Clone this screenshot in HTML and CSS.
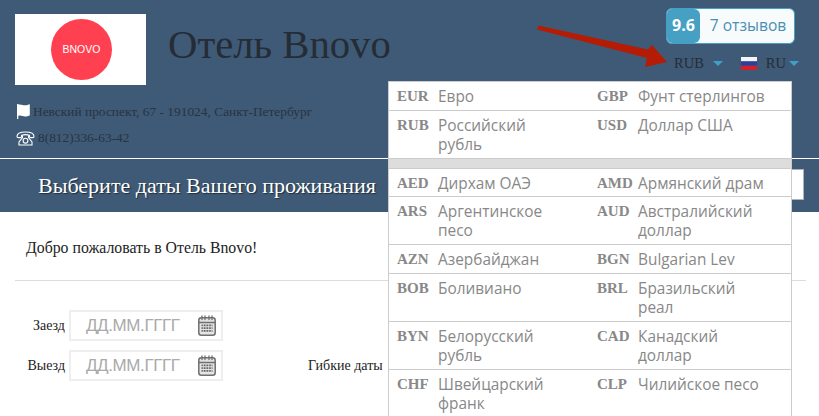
FILE: index.html
```html
<!DOCTYPE html>
<html lang="ru">
<head>
<meta charset="utf-8">
<title>Отель Bnovo</title>
<link rel="stylesheet" href="styles.css">
</head>
<body>
<header class="top">
  <div class="top-main">
    <div class="logo"><div class="logo-circle">BNOVO</div></div>
    <h1 class="hotel-name">Отель Bnovo</h1>
    <div class="top-right">
      <div class="rating"><span class="score">9.6</span><span class="reviews">7 отзывов</span></div>
      <div class="switchers">
        <span class="switch switch-cur">RUB<i class="caret"></i></span>
        <span class="switch"><svg class="flag-ru" width="16" height="13" viewBox="0 0 16 13"><rect width="16" height="4.4" fill="#f4f4f4"/><rect y="4.4" width="16" height="4.3" fill="#2b3f9c"/><rect y="8.7" width="16" height="4.3" fill="#d0222e"/></svg>RU<i class="caret"></i></span>
      </div>
    </div>
  </div>
  <div class="contact contact-addr">
    <svg class="ico-flag" width="13" height="15" viewBox="0 0 13 15"><path fill="#fff" d="M0 0h1.300v.5C4.500 0 6 1.300 8 1.300c1.800 0 3.200-.6 4.800-1v11.300c-1.600.5-3 1-4.800 1-2.300 0-3.700-1.500-6.700-.8V15H0z"/></svg>
    <span>Невский проспект, 67 - 191024, Санкт-Петербург</span>
  </div>
  <div class="contact contact-phone">
    <svg class="ico-phone" width="19" height="15" viewBox="0 0 19 15" fill="none" stroke="#fff" stroke-width="1.100"><path d="M1 5.500C1 2.800 4.500 1 9.500 1S18 2.800 18 5.500c0 .8-.6 1.100-1.300 1.100h-2c-.8 0-1.200-.5-1.200-1.200V4.300c-2.500-.8-5.500-.8-8 0v1.100c0 .7-.4 1.200-1.200 1.200h-2C1.600 6.600 1 6.300 1 5.500z"/><path d="M6.500 4.500v2L3 11v3h13v-3l-3.500-4.500v-2"/><circle cx="9.500" cy="9.700" r="2.400"/></svg>
    <span>8(812)336-63-42</span>
  </div>
</header>
<section class="banner">
  <h2 class="banner-title">Выберите даты Вашего проживания</h2>
  <div class="banner-input"></div>
</section>
<main class="content">
  <p class="welcome">Добро пожаловать в Отель Bnovo!</p>
  <hr class="rule">
  <form class="dates">
    <div class="date-row">
      <label class="date-label">Заезд</label>
      <div class="date-input"><span class="placeholder">ДД.ММ.ГГГГ</span>
        <svg class="ico-cal" width="18" height="21" viewBox="0 0 18 21"><rect x=".8" y="2.800" width="16.400" height="17.400" rx="2.500" fill="#e4e4e4" stroke="#6f6f6f" stroke-width="1.500"/><path d="M1 7.500h16" stroke="#6f6f6f" stroke-width="1.500"/><path d="M4 1v3.500M7 1v3.500M11 1v3.500M14 1v3.500" stroke="#6f6f6f" stroke-width="1.300" stroke-linecap="round"/><path d="M3.500 10.300h11M3.500 13.100h11M3.500 15.900h11" stroke="#666" stroke-width="1.700"/><path d="M5.300 9v8.500M8 9v8.500M10.700 9v8.500M13.300 9v8.500" stroke="#e4e4e4" stroke-width=".8"/></svg>
      </div>
    </div>
    <div class="date-row">
      <label class="date-label">Выезд</label>
      <div class="date-input"><span class="placeholder">ДД.ММ.ГГГГ</span>
        <svg class="ico-cal" width="18" height="21" viewBox="0 0 18 21"><rect x=".8" y="2.800" width="16.400" height="17.400" rx="2.500" fill="#e4e4e4" stroke="#6f6f6f" stroke-width="1.500"/><path d="M1 7.500h16" stroke="#6f6f6f" stroke-width="1.500"/><path d="M4 1v3.500M7 1v3.500M11 1v3.500M14 1v3.500" stroke="#6f6f6f" stroke-width="1.300" stroke-linecap="round"/><path d="M3.500 10.300h11M3.500 13.100h11M3.500 15.900h11" stroke="#666" stroke-width="1.700"/><path d="M5.300 9v8.500M8 9v8.500M10.700 9v8.500M13.300 9v8.500" stroke="#e4e4e4" stroke-width=".8"/></svg>
      </div>
      <span class="flex-dates">Гибкие даты</span>
    </div>
  </form>
</main>

<div class="currency-menu">
  <div class="cur-row">
    <div class="cur"><b>EUR</b><span>Евро</span></div>
    <div class="cur"><b>GBP</b><span>Фунт стерлингов</span></div>
  </div>
  <div class="cur-row">
    <div class="cur"><b>RUB</b><span>Российский рубль</span></div>
    <div class="cur"><b>USD</b><span>Доллар США</span></div>
  </div>
  <div class="cur-divider"></div>
  <div class="cur-row cur-row-tight">
    <div class="cur"><b>AED</b><span>Дирхам ОАЭ</span></div>
    <div class="cur"><b>AMD</b><span>Армянский драм</span></div>
  </div>
  <div class="cur-row">
    <div class="cur"><b>ARS</b><span>Аргентинское песо</span></div>
    <div class="cur"><b>AUD</b><span>Австралийский доллар</span></div>
  </div>
  <div class="cur-row">
    <div class="cur"><b>AZN</b><span>Азербайджан</span></div>
    <div class="cur"><b>BGN</b><span>Bulgarian Lev</span></div>
  </div>
  <div class="cur-row">
    <div class="cur"><b>BOB</b><span>Боливиано</span></div>
    <div class="cur"><b>BRL</b><span>Бразильский реал</span></div>
  </div>
  <div class="cur-row">
    <div class="cur"><b>BYN</b><span>Белорусский рубль</span></div>
    <div class="cur"><b>CAD</b><span>Канадский доллар</span></div>
  </div>
  <div class="cur-row">
    <div class="cur"><b>CHF</b><span>Швейцарский франк</span></div>
    <div class="cur"><b>CLP</b><span>Чилийское песо</span></div>
  </div>
</div>

<svg class="red-arrow" width="140" height="50" viewBox="0 0 140 50"><path fill="#b41c05" d="M2 4.500 3.500 .5 113 24.500 117 20 132 37 110 42 112 33z"/></svg>
</body>
</html>
```
FILE: styles.css
```css
html, body {
  margin: 0;
  padding: 0;
  height: 416px;
  overflow: hidden;
  background: #fff;
  font-family: "Liberation Serif", serif;
  color: #222;
}

.top {
  height: 158px;
  background: #3e5a77;
  border-bottom: 1px solid #fff;
  padding: 0 15px;
  display: flex;
  flex-direction: column;
}

.top-main {
  display: flex;
  height: 85px;
  padding-top: 14px;
}

.logo {
  width: 129px;
  height: 71px;
  padding-left: 2px;
  background: #fff;
  display: flex;
  align-items: center;
  justify-content: center;
  flex: none;
}

.logo-circle {
  width: 61px;
  height: 61px;
  border-radius: 50%;
  background: #ff4050;
  color: #fff;
  font: 10.500px/61px "Liberation Sans", sans-serif;
  text-align: center;
}

.hotel-name {
  margin: 8px 0 0 22px;
  font-weight: normal;
  font-size: 40.700px;
  line-height: 46px;
  color: #262c35;
}

.top-right {
  margin-left: auto;
  margin-top: -6px;
  margin-right: 9px;
  display: flex;
  flex-direction: column;
  align-items: flex-end;
}

.rating {
  display: flex;
  width: 129px;
  height: 36px;
  box-sizing: border-box;
  border: 1.500px solid #46a0c4;
  border-radius: 6px;
  background: #f8fbfc;
  overflow: hidden;
  font-family: "Open Sans", sans-serif;
  font-size: 15.600px;
  line-height: 32px;
}

.score {
  width: 33px;
  background: #45a0c4;
  color: #fff;
  font-weight: 700;
  font-size: 16px;
  text-align: center;
  border-radius: 0 6px 6px 0;
  flex: none;
}

.reviews {
  flex: 1;
  text-align: center;
  color: #4b8fb3;
  padding-left: 2px;
}

.switchers {
  display: flex;
  gap: 18px;
  margin-top: 10px;
  font-size: 14.500px;
  line-height: 18px;
  color: #262c35;
  margin-right: -4px;
}

.switch {
  display: flex;
  align-items: center;
}

.flag-ru {
  margin-right: 9px;
}

.caret {
  display: inline-block;
  width: 0;
  height: 0;
  margin-left: 3px;
  border-left: 5px solid transparent;
  border-right: 5px solid transparent;
  border-top: 5px solid #3e9fc8;
}

.switch-cur .caret {
  margin-left: 9px;
}

.contact {
  display: flex;
  align-items: flex-end;
  font-size: 13.400px;
  color: #2a3340;
  padding-left: 2px;
}

.contact-addr {
  margin-top: 3px;
  padding-top: 2px;
  line-height: 15px;
}

.contact-addr span {
  margin-left: 3px;
}

.contact-phone {
  margin-top: 11px;
  line-height: 16px;
  padding-left: 1px;
}

.contact-phone span {
  margin-left: 3px;
}

.banner {
  height: 53px;
  background: #3e5a77;
  display: flex;
  align-items: center;
  padding-left: 38px;
  padding-right: 15px;
}

.banner-title {
  margin: 0;
  font-weight: normal;
  font-size: 22px;
  color: #fff;
  text-shadow: 1px 1px 1px #1e2d3c;
  white-space: nowrap;
}

.banner-input {
  margin-left: auto;
  width: 120px;
  height: 29px;
  margin-top: -3px;
  background: #fff;
  border: 1px solid #aab4bf;
}

.content {
  padding: 0 13px 0 15px;
}

.welcome {
  margin: 0;
  padding: 27px 0 0 11px;
  font-size: 15.800px;
  line-height: 17px;
  height: 41px;
  color: #222;
}

.rule {
  margin: 0;
  border: 0;
  border-top: 1px solid #dcdcdc;
  height: 0;
}

.dates {
  padding-top: 29px;
  display: flex;
  flex-direction: column;
  gap: 9px;
}

.date-row {
  display: flex;
  align-items: center;
  height: 31px;
}

.date-label {
  width: 50px;
  text-align: right;
  font-size: 14px;
  margin-right: 4px;
}

.date-input {
  width: 154px;
  height: 31px;
  box-sizing: border-box;
  border: 2px solid #eee;
  display: flex;
  align-items: center;
  justify-content: space-between;
  padding: 0 5px 0 15px;
  background: #fff;
}

.placeholder {
  font: 17px "Liberation Sans", sans-serif;
  letter-spacing: -.4px;
  color: #aaa;
}

.flex-dates {
  margin-left: 85px;
  font-size: 14px;
  line-height: 16px;
  padding-top: 1px;
}

.currency-menu {
  position: absolute;
  left: 388px;
  top: 81px;
  width: 402px;
  height: 345px;
  background: #fff;
  border: 1px solid #ccc;
  font-family: "Open Sans", sans-serif;
}

.cur-row {
  display: grid;
  grid-template-columns: 200px 200px;
  border-bottom: 1px solid #ccc;
  padding: 5px 0 4px;
}

.cur-row-tight {
  padding-bottom: 3px;
}

.cur {
  display: flex;
  align-items: flex-start;
  padding-left: 8px;
  font-size: 15.400px;
  line-height: 19px;
  color: #888;
}

.cur b {
  font-family: "Liberation Serif", serif;
  font-size: 15px;
  width: 41px;
  flex: none;
  color: #888;
}

.cur span {
  width: 130px;
}

.cur-divider {
  height: 9px;
  background: #ddd;
  border-bottom: 1px solid #ccc;
}

.red-arrow {
  position: absolute;
  left: 535px;
  top: 25px;
}
```
